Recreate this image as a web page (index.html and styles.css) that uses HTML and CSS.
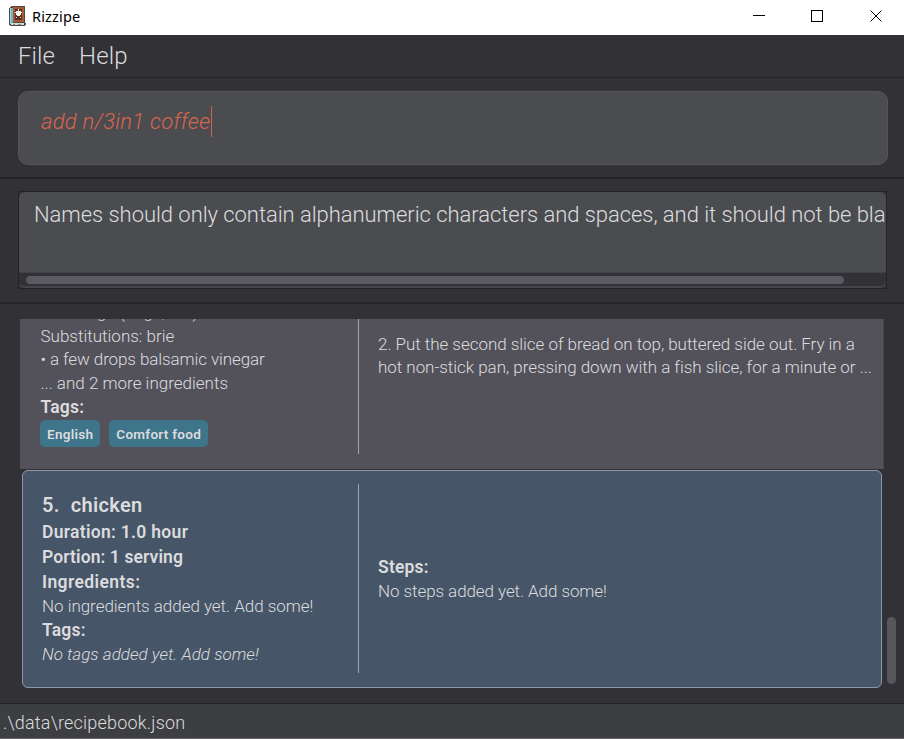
FILE: index.html
```
<!DOCTYPE html>
<html lang="en">
<head>
<meta charset="utf-8">
<title>Rizzipe</title>
<link rel="stylesheet" href="styles.css">
</head>
<body>
<header class="titlebar">
  <svg class="app-icon" width="17" height="20" viewBox="0 0 17 20" shape-rendering="crispEdges">
    <path d="M2 0H16V17H17V19H16V20H1V19H0V2H1V1H2Z" fill="#4a4a4a"/>
    <path d="M1 2H4V17H1Z" fill="#6bb3cc"/>
    <path d="M1 2H2V18H1Z" fill="#a5d6e4"/>
    <path d="M4 1H15V16H4Z" fill="#a9592d"/>
    <path d="M6 3H13V14H6Z" fill="#5a3122"/>
    <path d="M9 3H10V5H12V6H13V7H12V9H11V10H8V9H7V7H6V6H7V5H9Z" fill="#f0f2ee"/>
    <path d="M7 11H8V12H7ZM11 11H12V12H11Z" fill="#d8d0c4"/>
    <path d="M2 17H15V19H2Z" fill="#d8d8cc"/>
    <path d="M4 18H6V19H4ZM9 18H12V19H9Z" fill="#8c8c88"/>
  </svg>
  <span class="app-name">Rizzipe</span>
  <svg class="window-controls" width="130" height="14" viewBox="0 0 130 14" fill="none" stroke="#000">
    <path d="M0 6.5H12" shape-rendering="crispEdges"/>
    <path d="M58.500 1.500H69.500V12.500H58.500Z" shape-rendering="crispEdges"/>
    <path d="M117.500 1.500L128.500 12.500M128.500 1.500L117.500 12.500"/>
  </svg>
</header>
<nav class="menubar"><span>File</span><span>Help</span></nav>
<section class="command-pane">
  <div class="command-box"><span class="command">add n/3in1 coffee</span><span class="caret"></span></div>
</section>
<section class="result-pane">
  <div class="result-box">
    <div class="result-text">Names should only contain alphanumeric characters and spaces, and it should not be bla</div>
    <div class="h-track"><div class="h-thumb"></div></div>
  </div>
</section>
<main class="list-pane">
  <div class="list">
    <article class="card previous">
      <div class="summary">
        <p>• 1 orange (large, cut)</p>
        <p>Substitutions: brie</p>
        <p class="vinegar">• a few drops balsamic vinegar</p>
        <p>... and 2 more ingredients</p>
        <p class="label">Tags:</p>
        <div class="tags"><span class="tag">English</span><span class="tag">Comfort food</span></div>
      </div>
      <div class="steps">
        <p>2. Put the second slice of bread on top, buttered side out. Fry in a</p>
        <p>hot non-stick pan, pressing down with a fish slice, for a minute or ...</p>
      </div>
    </article>
    <article class="card selected">
      <div class="summary">
        <h2><span>5.</span><span>chicken</span></h2>
        <p class="label fact">Duration: 1.0 hour</p>
        <p class="label fact portion">Portion: 1 serving</p>
        <p class="label fact ingredients">Ingredients:</p>
        <p class="no-ingredients">No ingredients added yet. Add some!</p>
        <p class="label">Tags:</p>
        <p class="empty">No tags added yet. Add some!</p>
      </div>
      <div class="steps">
        <p class="label">Steps:</p>
        <p class="no-steps">No steps added yet. Add some!</p>
      </div>
    </article>
  </div>
  <div class="v-track"><div class="v-thumb"></div></div>
</main>
<footer class="statusbar">.\data\recipebook.json</footer>
</body>
</html>
```
FILE: styles.css
```
* { box-sizing: border-box; }
body {
  margin: 0;
  width: 904px;
  height: 739px;
  display: flex;
  flex-direction: column;
  overflow: hidden;
  background: #323135;
  color: #dcdcdf;
  font-family: Roboto, sans-serif;
  font-weight: 300;
}
h2, p { margin: 0; white-space: nowrap; }

.titlebar {
  flex: none;
  height: 35px;
  display: flex;
  align-items: center;
  padding: 0 21px 3px 9px;
  background: #fff;
  color: #000;
}
.app-name {
  margin-left: 6px;
  font: 400 14.5px/20px "Noto Sans", sans-serif;
  letter-spacing: .15px;
}
.window-controls { margin-left: auto; }

.menubar {
  flex: none;
  height: 43px;
  padding-left: 18px;
  display: flex;
  gap: 24px;
  border-bottom: 1px solid #242327;
  font-size: 24px;
  letter-spacing: .1px;
  line-height: 43px;
}

.command-pane {
  flex: none;
  height: 101px;
  padding: 13px 16px 0 18px;
  border-bottom: 2px solid #252428;
}
.command-box {
  height: 74px;
  padding: 14px 22px;
  display: flex;
  border: 1px solid #55545b;
  border-radius: 10px;
  background: #4b4c50;
}
.command {
  flex: none;
  width: 170px;
  color: #d9654f;
  font-size: 22px;
  font-style: italic;
  font-weight: 300;
  letter-spacing: .25px;
  line-height: 32px;
  white-space: nowrap;
}
.caret { flex: none; width: 1px; height: 31px; background: #d0624f; }

.result-pane {
  flex: none;
  height: 125px;
  padding: 12px 17px 0 18px;
  border-bottom: 2px solid #252428;
}
.result-box {
  height: 98px;
  display: flex;
  flex-direction: column;
  border: 1px solid #232226;
  overflow: hidden;
  background: #323135;
}
.result-text {
  flex: 1;
  padding: 4px 0 0 15px;
  border-radius: 6px 6px 0 0;
  background: #4b4c50;
  font-size: 22px;
  letter-spacing: -.05px;
  line-height: 38px;
  white-space: nowrap;
  overflow: hidden;
}
.h-track {
  height: 16px;
  padding: 3px 42px 0 7px;
  border-top: 1px solid #414147;
  border-bottom: 2px solid #45464b;
  border-radius: 0 0 6px 6px;
}
.h-thumb { height: 8px; border-radius: 4px; background: #5a5a62; }

.list-pane {
  flex: 1;
  min-height: 0;
  display: flex;
  padding: 15px 8px 15px 20px;
}
.list {
  flex: none;
  width: 864px;
  display: flex;
  flex-direction: column;
  justify-content: flex-end;
  gap: 1px;
  overflow: hidden;
}
.card {
  flex: none;
  display: flex;
  font-size: 17px;
}
.summary { flex: none; border-right: 1px solid #a1a4ad; }
.label { font-size: 17.5px; font-weight: 600; letter-spacing: .2px; }

.previous {
  height: 168px;
  padding-bottom: 15px;
  padding-left: 20px;
  background: #53525a;
  border-right: 1px solid #48474e;
}
.previous .summary { width: 319px; line-height: 23.500px; }
.previous .summary p { padding-left: .5px; }
.previous .label { line-height: 24px; }
.previous .vinegar { letter-spacing: -.1px; }
.previous .steps { padding: 32px 0 0 19px; line-height: 23px; letter-spacing: -.04px; }
.tags { display: flex; gap: 9px; padding-top: 1px; }
.tag {
  height: 27px;
  padding: 0 7px;
  border-radius: 5px;
  background: #3f758a;
  font-size: 13.500px;
  font-weight: 600;
  letter-spacing: .28px;
  line-height: 28px;
}

.selected {
  height: 218px;
  width: 860px;
  margin-left: 2px;
  padding: 13px 0 14px 19px;
  border: 1px solid #8f98a7;
  border-radius: 6px;
  background: #465567;
}
.selected .summary { width: 317px; padding-top: 7px; line-height: 24px; }
.selected h2 {
  display: flex;
  gap: 11px;
  padding-bottom: 1px;
  font-size: 20px;
  font-weight: 600;
  letter-spacing: .33px;
  line-height: 28px;
}
.selected .fact { line-height: 25px; letter-spacing: .3px; }
.selected .portion { letter-spacing: .1px; }
.selected .ingredients { line-height: 24px; letter-spacing: .4px; }
.no-ingredients { letter-spacing: -.04px; }
.selected .steps { align-self: center; padding-left: 19px; line-height: 24px; }
.no-steps { letter-spacing: -.08px; }
.empty { font-style: italic; }

.v-track { flex: 1; display: flex; align-items: flex-end; justify-content: flex-end; padding-bottom: 4px; }
.v-thumb { width: 9px; height: 67px; border-radius: 4.500px; background: #56565d; }

.statusbar {
  flex: none;
  height: 36px;
  padding-left: 3px;
  border-top: 1px solid #242327;
  border-bottom: 1px solid #66666a;
  background: #3d3e42;
  font-size: 18px;
  letter-spacing: .2px;
  line-height: 38px;
}
```
